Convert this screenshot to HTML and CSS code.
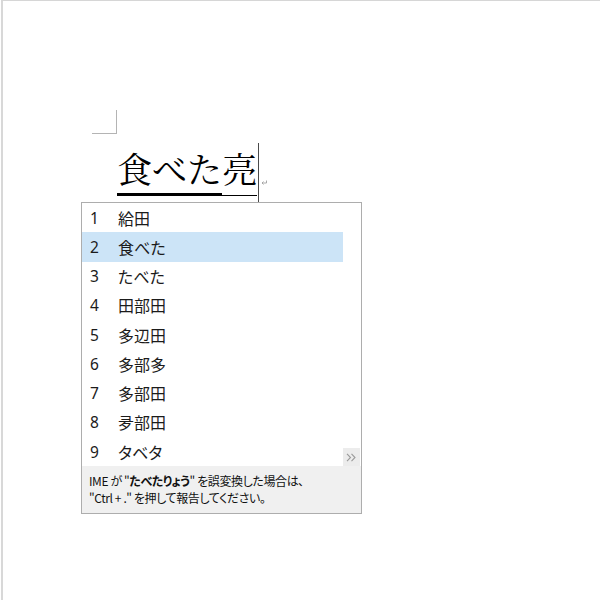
FILE: index.html
```html
<!DOCTYPE html>
<html lang="ja">
<head>
<meta charset="utf-8">
<title>IME 候補</title>
<link rel="stylesheet" href="styles.css">
</head>
<body>
<div class="page">
  <div class="corner"></div>
  <div class="line">
    <span class="word"><span class="conv">食べた</span><span class="rest">亮</span></span>
    <span class="caret"></span>
    <svg class="para" width="6" height="5" viewBox="0 0 6 5"><path d="M5.5 0.5V3H1M2.5 1.5L1 3l1.5 1.5" fill="none" stroke="#a0a0a0" stroke-width="0.9"/></svg>
  </div>

  <div class="ime">
    <div class="list">
      <ul class="items">
        <li class="item"><span class="num">1</span><span class="cand">給田</span></li>
        <li class="item selected"><span class="num">2</span><span class="cand">食べた</span></li>
        <li class="item"><span class="num">3</span><span class="cand">たべた</span></li>
        <li class="item"><span class="num">4</span><span class="cand">田部田</span></li>
        <li class="item"><span class="num">5</span><span class="cand">多辺田</span></li>
        <li class="item"><span class="num">6</span><span class="cand">多部多</span></li>
        <li class="item"><span class="num">7</span><span class="cand">多部田</span></li>
        <li class="item"><span class="num">8</span><span class="cand">夛部田</span></li>
        <li class="item"><span class="num">9</span><span class="cand">タベタ</span></li>
      </ul>
      <div class="gutter">
        <div class="expand">
          <svg width="11" height="9" viewBox="0 0 11 9"><path d="M1 0.8L4.5 4.5L1 8.2M5.5 0.8L9 4.5L5.5 8.2" fill="none" stroke="#9a9a9a" stroke-width="1.1"/></svg>
        </div>
      </div>
    </div>
    <div class="footer">
      <p>IME が "<b>たべたりょう</b>" を誤変換した場合は、</p>
      <p>"Ctrl + ." を押して報告してください。</p>
    </div>
  </div>
</div>
</body>
</html>
```

FILE: styles.css
```css
html, body {
  margin: 0;
  padding: 0;
  background: #ffffff;
}

.page {
  position: relative;
  margin-left: 1px;
  height: 599px;
  border-left: 2px solid #d8d8d8;
  border-top: 1px solid #d6d6d6;
  background: #ffffff;
  overflow: hidden;
}

.corner {
  margin: 109px 0 0 89px;
  width: 24px;
  height: 23px;
  border-right: 1px solid #b4b4b4;
  border-bottom: 1px solid #b4b4b4;
}

.line {
  display: flex;
  align-items: flex-start;
  margin: 9px 0 0 114px;
}

.word {
  display: flex;
  align-items: flex-end;
  margin-top: 8px;
  font-family: "Noto Serif CJK JP", "Noto Sans CJK JP", serif;
  font-size: 35px;
  line-height: 1;
  color: #000;
}

.conv {
  padding-bottom: 7px;
  border-bottom: 3px solid #000;
}

.rest {
  padding-bottom: 9px;
  border-bottom: 1px solid #000;
}

.caret {
  width: 1px;
  height: 59px;
  margin-left: 1px;
  background: #4a4a4a;
}

.para {
  display: block;
  margin: 37px 0 0 2px;
}

.ime {
  position: absolute;
  left: 78px;
  top: 201px;
  width: 279px;
  height: 310px;
  border: 1px solid #adadad;
  background: #ffffff;
  display: flex;
  flex-direction: column;
  font-family: "Noto Sans CJK JP", sans-serif;
  font-feature-settings: "palt";
  color: #1b1b1b;
}

.list {
  display: flex;
}

.items {
  list-style: none;
  margin: 0;
  padding: 0;
  width: 261px;
}

.item {
  display: flex;
  align-items: center;
  height: 29.25px;
  padding-left: 8px;
  font-size: 16px;
}

.item.selected {
  background: #cce4f7;
}

.num {
  width: 28px;
  font-family: "Noto Sans", sans-serif;
  font-size: 15.5px;
}

.cand {
  line-height: 1;
}

.gutter {
  flex: 1;
  display: flex;
  align-items: flex-end;
}

.expand {
  width: 17px;
  height: 18px;
  background: #ececec;
  display: flex;
  align-items: center;
  justify-content: center;
}

.footer {
  flex: 1;
  background: #f0f0f0;
  padding: 6px 7px 0;
  font-size: 12px;
  line-height: 17px;
  letter-spacing: -0.4px;
  color: #111111;
}

.footer p {
  margin: 0;
  white-space: nowrap;
}

.footer b {
  font-weight: 700;
}
```
